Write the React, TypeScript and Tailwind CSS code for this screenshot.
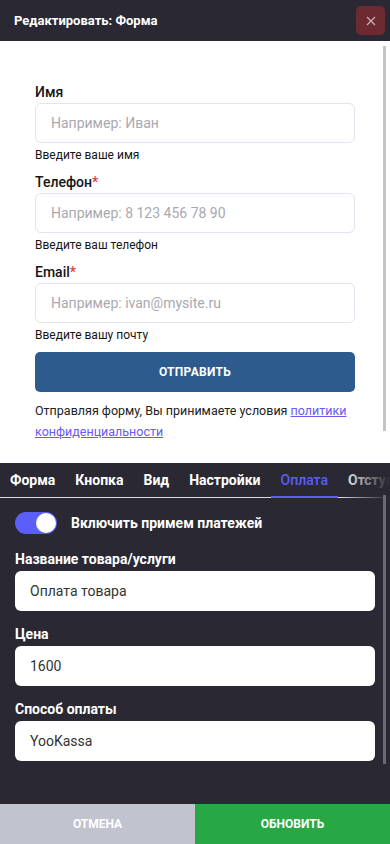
import React from "react"

const tabs = ["Форма", "Кнопка", "Вид", "Настройки", "Оплата", "Отступы"]

function PreviewField({ label, required, placeholder, hint }: { label: string; required?: boolean; placeholder: string; hint: string }) {
  return (
    <div className="flex flex-col">
      <label className="text-[14px] font-medium text-[#151515] leading-[16px]">
        {label}
        {required && <span className="text-[#e0364a]">*</span>}
      </label>
      <div className="mt-[3px] h-[40px] rounded-[6px] border border-[#e3e3ef] flex items-center px-[15px] text-[14px] text-[#a9a9b0]">
        {placeholder}
      </div>
      <p className="mt-[4px] text-[12px] text-[#151515] leading-[16px]">{hint}</p>
    </div>
  )
}

function SettingField({ label, value }: { label: string; value: string }) {
  return (
    <div className="flex flex-col">
      <label className="text-[14px] font-bold text-white leading-[18px]">{label}</label>
      <div className="mt-[3px] h-[40px] rounded-[6px] bg-white flex items-center px-[15px] text-[14px] text-[#333]">
        {value}
      </div>
    </div>
  )
}

export default function App() {
  return (
    <div className="w-[390px] h-[844px] flex flex-col bg-[#2a2933] overflow-hidden" style={{ fontFamily: "Roboto, 'Noto Sans', sans-serif" }}>
      {/* header */}
      <div className="h-[41px] shrink-0 flex items-center justify-between pl-[14px] pr-[5px]">
        <h1 className="text-[13px] font-bold text-white">Редактировать: Форма</h1>
        <button className="w-[29px] h-[29px] rounded-[5px] bg-[#6e2a31] flex items-center justify-center">
          <svg width="10" height="10" viewBox="0 0 10 10" stroke="#c9b3b5" strokeWidth="1.2">
            <path d="M1 1l8 8M9 1l-8 8" />
          </svg>
        </button>
      </div>

      {/* preview */}
      <div className="h-[422px] shrink-0 bg-white relative">
        <div className="absolute right-[4px] top-[5px] w-[3px] h-[385px] bg-[#c4c4c4]" />
        <div className="px-[35px] pt-[43px] flex flex-col gap-[11px]">
          <PreviewField label="Имя" placeholder="Например: Иван" hint="Введите ваше имя" />
          <PreviewField label="Телефон" required placeholder="Например: 8 123 456 78 90" hint="Введите ваш телефон" />
          <PreviewField label="Email" required placeholder="Например: ivan@mysite.ru" hint="Введите вашу почту" />
        </div>
        <div className="px-[35px] mt-[9px]">
          <button className="w-full h-[40px] rounded-[5px] bg-[#2e5b8d] text-white text-[12px] font-bold tracking-[0.3px]">
            ОТПРАВИТЬ
          </button>
          <p className="mt-[8px] text-[12.5px] leading-[21px] text-[#222]">
            Отправляя форму, Вы принимаете условия{" "}
            <a className="text-[#6a5af0] underline">политики конфиденциальности</a>
          </p>
        </div>
      </div>

      {/* settings */}
      <div className="flex-1 relative">
        <div className="relative border-b border-[#dcdce0]">
          <div className="flex h-[34px] items-center whitespace-nowrap">
            {tabs.map((t) => (
              <div
                key={t}
                className={
                  t === "Оплата"
                    ? "h-full flex items-center px-[10px] text-[14px] font-medium text-[#5b5ef5] relative"
                    : "h-full flex items-center px-[10px] text-[14px] font-bold text-white"
                }
              >
                {t}
                {t === "Оплата" && <div className="absolute left-0 right-0 -bottom-[1px] h-[2px] bg-[#5b5ef5]" />}
              </div>
            ))}
          </div>
          <div className="absolute right-0 top-0 -bottom-[1px] w-[50px] bg-gradient-to-r from-transparent to-[#2a2933]" />
        </div>

        <div className="absolute right-[4px] top-[32px] w-[3px] h-[269px] bg-[#6a6a70]" />

        <div className="px-[15px] pt-[14px] flex flex-col">
          <div className="flex items-center gap-[14px]">
            <div className="w-[42px] h-[22px] rounded-full bg-[#5b5ef7] flex items-center justify-end pr-[1px]">
              <div className="w-[20px] h-[20px] rounded-full bg-white" />
            </div>
            <span className="text-[14px] font-bold text-white">Включить примем платежей</span>
          </div>
          <div className="mt-[16px] flex flex-col gap-[14px]">
            <SettingField label="Название товара/услуги" value="Оплата товара" />
            <SettingField label="Цена" value="1600" />
            <SettingField label="Способ оплаты" value="YooKassa" />
          </div>
        </div>
      </div>

      {/* footer */}
      <div className="h-[40px] shrink-0 flex">
        <button className="w-1/2 bg-[#c1c3cf] text-white text-[12px] font-bold">ОТМЕНА</button>
        <button className="w-1/2 bg-[#28a745] text-white text-[12px] font-bold">ОБНОВИТЬ</button>
      </div>
    </div>
  )
}
